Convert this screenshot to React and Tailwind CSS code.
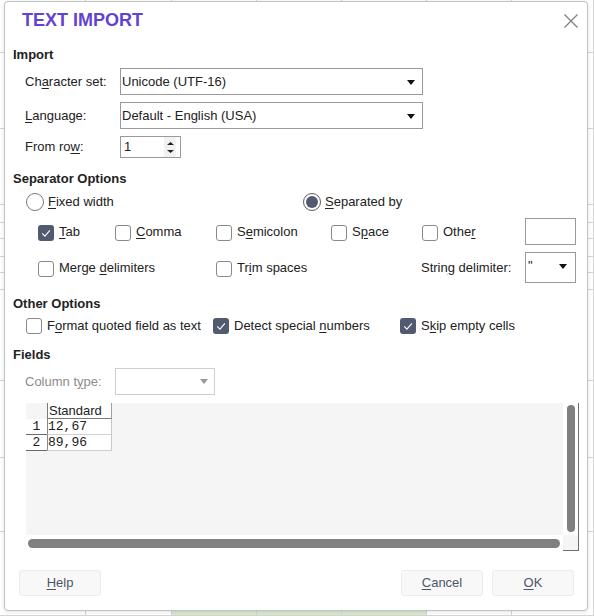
import React from "react";

const U = ({ children }) => <span className="underline underline-offset-[2px]">{children}</span>;

function Check({ checked, offset = true }) {
  const pos = offset ? "mt-[2px]" : "";
  if (checked) {
    return (
      <span className={`${pos} flex h-[16px] w-[16px] shrink-0 items-center justify-center rounded-[3px] bg-[#515a6e]`}>
        <svg width="16" height="16" viewBox="0 0 16 16">
          <path d="M4.2 8.4 L6.9 11.1 L11.9 5.3" fill="none" stroke="#ffffff" strokeWidth="1.1" />
        </svg>
      </span>
    );
  }
  return <span className={`${pos} h-[16px] w-[16px] shrink-0 rounded-[3px] border border-[#8a8a8a] bg-white`} />;
}

function Opt({ className = "", checked, offset = true, children }) {
  return (
    <div className={`flex items-center gap-[5px] ${className}`}>
      <Check checked={checked} offset={offset} />
      <span className="whitespace-nowrap">{children}</span>
    </div>
  );
}

function Radio({ checked }) {
  return (
    <span
      className={`flex h-[18px] w-[18px] shrink-0 items-center justify-center rounded-full border bg-white ${
        checked ? "border-[#5a5a5a]" : "border-[#7a7a7a]"
      }`}
    >
      {checked && <span className="h-[12px] w-[12px] rounded-full bg-[#515a6e]" />}
    </span>
  );
}

const Tri = ({ color = "#111111", className = "" }) => (
  <svg width="8" height="5" viewBox="0 0 8 5" className={className}>
    <path d="M0 0H8L4 5Z" fill={color} />
  </svg>
);

function Heading({ children, mt }) {
  return <div className={`${mt} h-[16px] pl-[8px] font-bold`}>{children}</div>;
}

function Btn({ className = "", children }) {
  return (
    <div
      className={`flex h-[26px] w-[82px] items-center justify-center rounded-[3px] border border-[#ececec] bg-[#f8f8f8] text-[#4d5568] ${className}`}
    >
      <span>{children}</span>
    </div>
  );
}

const ROWS = [53, 76, 76, 18, 16, 18, 16, 17, 91, 77, 74, 84];
const COLS = [86, 86, 85, 85, 85, 85, 82];

function Background() {
  return (
    <div className="absolute inset-0 flex flex-col">
      {ROWS.map((h, i) => (
        <div key={i} className="flex shrink-0 border-b border-[#d4d4d4]" style={{ height: h }}>
          {COLS.map((w, j) => {
            const green = i === ROWS.length - 1 && j >= 2 && j <= 4;
            return (
              <div
                key={j}
                className={`h-full shrink-0 border-r border-[#d4d4d4] ${green ? "bg-[#d9ead0]" : ""}`}
                style={{ width: w }}
              />
            );
          })}
        </div>
      ))}
    </div>
  );
}

export default function App() {
  return (
    <div className="relative h-[616px] w-[594px] overflow-hidden bg-white font-['Liberation_Sans',Arial,sans-serif] text-[13px] leading-[16px] text-[#222222]">
      <Background />
      <div className="absolute left-[4px] top-[1px] flex h-[610px] w-[584px] flex-col rounded-[4px] border border-[#c2c2c2] bg-white shadow-[0_1px_4px_rgba(0,0,0,0.12)]">
        {/* title */}
        <div className="mt-[6px] flex h-[25px] items-center justify-between pl-[17px] pr-[9px]">
          <span className="text-[18px] font-bold leading-[25px] text-[#6043d3]">TEXT IMPORT</span>
          <svg width="14" height="14" viewBox="0 0 14 14">
            <path d="M0.5 0.5 L13.5 13.5 M13.5 0.5 L0.5 13.5" stroke="#7d7d7d" strokeWidth="1.2" />
          </svg>
        </div>

        <Heading mt="mt-[14px]">Import</Heading>

        <div className="mt-[5px] flex h-[27px] items-center">
          <span className="w-[115px] pl-[20px]">
            Ch<U>a</U>racter set:
          </span>
          <div className="flex h-[27px] w-[303px] items-center justify-between border border-[#9a9a9a] pl-[1px] pr-[7px]">
            <span>Unicode (UTF-16)</span>
            <Tri className="mt-[2px]" />
          </div>
        </div>

        <div className="mt-[7px] flex h-[27px] items-center">
          <span className="w-[115px] pl-[20px]">
            <U>L</U>anguage:
          </span>
          <div className="flex h-[27px] w-[303px] items-center justify-between border border-[#9a9a9a] pl-[1px] pr-[7px]">
            <span>Default - English (USA)</span>
            <Tri className="mt-[2px]" />
          </div>
        </div>

        <div className="mt-[7px] flex h-[22px] items-center">
          <span className="w-[115px] pl-[20px]">
            From ro<U>w</U>:
          </span>
          <div className="flex h-[22px] w-[61px] items-center justify-between border border-[#9a9a9a] pl-[3px]">
            <span>1</span>
            <div className="mr-[4px] flex h-[20px] w-[12px] flex-col items-center justify-center gap-[5px] bg-[#f1f1f1]">
              <svg width="7" height="3" viewBox="0 0 7 3">
                <path d="M0 3H7L3.5 0Z" fill="#222222" />
              </svg>
              <svg width="7" height="3" viewBox="0 0 7 3">
                <path d="M0 0H7L3.5 3Z" fill="#222222" />
              </svg>
            </div>
          </div>
        </div>

        <Heading mt="mt-[13px]">Separator Options</Heading>

        <div className="mt-[6px] flex h-[18px] items-center">
          <div className="ml-[21px] flex w-[277px] items-center gap-[4px]">
            <Radio />
            <span>
              <U>F</U>ixed width
            </span>
          </div>
          <div className="flex items-center gap-[4px]">
            <Radio checked />
            <span>
              <U>S</U>eparated by
            </span>
          </div>
        </div>

        <div className="mt-[7px] flex h-[27px] items-center">
          <Opt className="ml-[33px] w-[77px]" checked>
            <U>T</U>ab
          </Opt>
          <Opt className="w-[101px]">
            <U>C</U>omma
          </Opt>
          <Opt className="w-[115px]">
            S<U>e</U>micolon
          </Opt>
          <Opt className="w-[91px]">
            S<U>p</U>ace
          </Opt>
          <Opt className="w-[103px]">
            Othe<U>r</U>
          </Opt>
          <div className="h-[27px] w-[51px] border border-[#9a9a9a] bg-white" />
        </div>

        <div className="mt-[7px] flex h-[31px] items-center">
          <Opt className="ml-[33px] w-[178px]">
            Merge <U>d</U>elimiters
          </Opt>
          <Opt className="w-[205px]">
            Tr<U>i</U>m spaces
          </Opt>
          <span className="w-[104px] whitespace-nowrap">
            Strin<U>g</U> delimiter:
          </span>
          <div className="flex h-[31px] w-[51px] items-center justify-between border border-[#9a9a9a] pl-[2px] pr-[8px]">
            <span className="mb-[4px]">"</span>
            <Tri className="mb-[3px]" />
          </div>
        </div>

        <Heading mt="mt-[13px]">Other Options</Heading>

        <div className="mt-[6px] flex h-[16px] items-center">
          <Opt className="ml-[21px] w-[187px]" offset={false}>
            F<U>o</U>rmat quoted field as text
          </Opt>
          <Opt className="w-[187px]" checked offset={false}>
            Detect special <U>n</U>umbers
          </Opt>
          <Opt checked offset={false}>
            S<U>k</U>ip empty cells
          </Opt>
        </div>

        <Heading mt="mt-[13px]">Fields</Heading>

        <div className="mt-[5px] flex h-[27px] items-center">
          <span className="w-[110px] pl-[20px] text-[#8c8c8c]">
            Column t<U>y</U>pe:
          </span>
          <div className="flex h-[27px] w-[100px] items-center justify-end border border-[#cfcfcf] pr-[6px]">
            <Tri color="#9a9a9a" />
          </div>
        </div>

        {/* preview */}
        <div className="ml-[21px] mt-[8px] grid h-[148px] w-[553px] grid-cols-[537px_16px] grid-rows-[132px_16px]">
          <div className="overflow-hidden bg-[#f5f5f5]">
            <div className="flex h-[16px]">
              <div className="w-[21px]" />
              <div className="w-[65px] border-b border-l border-r border-b-[#7a7a7a] border-l-[#7a7a7a] border-r-[#a0a0a0] bg-white pl-[1px] leading-[15px]">
                Standard
              </div>
            </div>
            {[
              ["1", "12,67"],
              ["2", "89,96"],
            ].map(([n, v]) => (
              <div key={n} className="flex h-[16px] font-['Liberation_Mono',monospace] leading-[15px]">
                <div className="w-[21px] border-b border-[#6a6a6a] bg-white text-center">{n}</div>
                <div className="w-[65px] border-b border-l border-r border-b-[#d0d0d0] border-l-[#8a8a8a] border-r-[#c8c8c8] bg-white">
                  {v}
                </div>
              </div>
            ))}
          </div>
          <div className="flex justify-center border-r border-[#6e6e6e] pt-[2px]">
            <div className="h-[127px] w-[8px] rounded-full bg-[#808080]" />
          </div>
          <div className="flex items-center pl-[2px]">
            <div className="mt-[1px] h-[9px] w-[532px] rounded-full bg-[#808080]" />
          </div>
          <div className="border-b border-r border-[#6e6e6e] bg-[#f5f5f5]" />
        </div>

        {/* buttons */}
        <div className="mt-[19px] flex h-[26px] pl-[14px] pr-[13px]">
          <Btn>
            <U>H</U>elp
          </Btn>
          <div className="flex-1" />
          <Btn>
            <U>C</U>ancel
          </Btn>
          <Btn className="ml-[9px]">
            <U>O</U>K
          </Btn>
        </div>
      </div>
    </div>
  );
}
